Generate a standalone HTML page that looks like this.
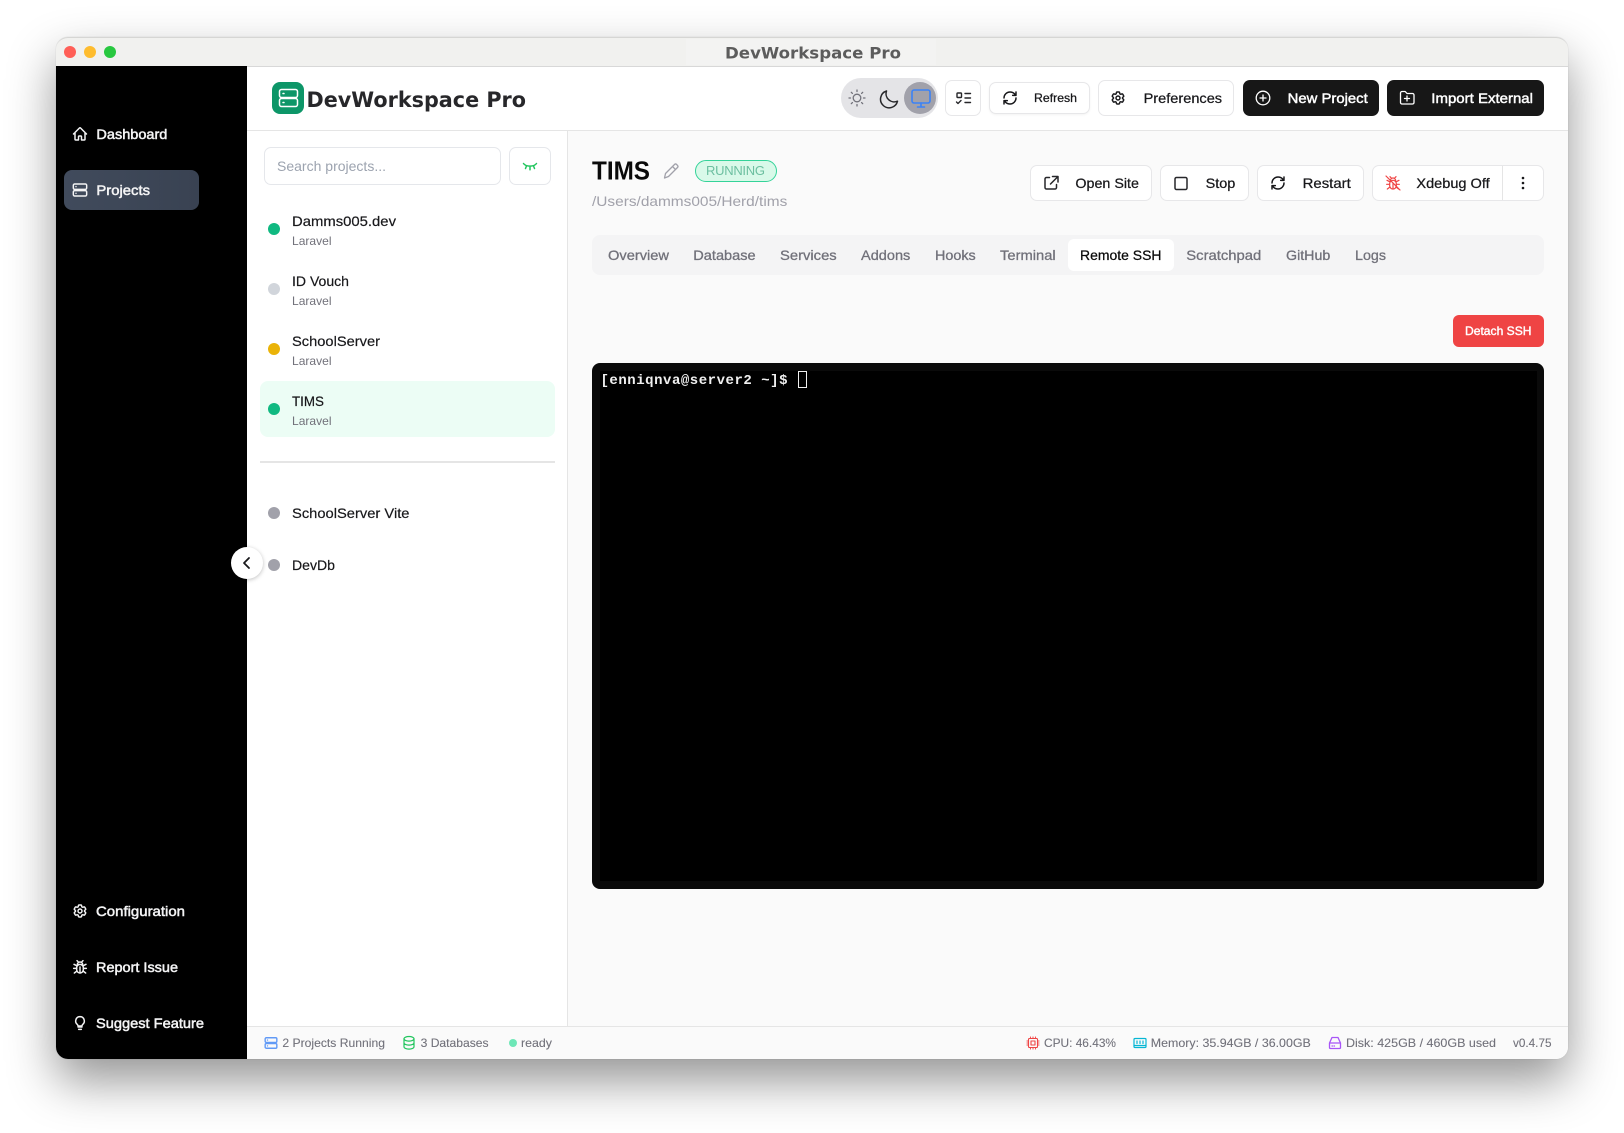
<!DOCTYPE html>
<html lang="en">
<head>
<meta charset="utf-8">
<title>DevWorkspace Pro</title>
<style>
html,body{margin:0;padding:0;background:#fff;width:1624px;height:1133px;overflow:hidden}
.a{position:absolute;box-sizing:border-box}
.btn{position:absolute;box-sizing:border-box;background:#fff;border:1px solid #e7e7e9;border-radius:7px}
.dark{position:absolute;background:#171717;border-radius:7px}
.dot{position:absolute;width:12px;height:12px;border-radius:50%}
svg.o{position:absolute;left:0;top:0;filter:blur(.25px)}
text{font-family:"Liberation Sans",sans-serif}
</style>
</head>
<body>
<!-- window -->
<div class="a" style="left:56px;top:37px;width:1512px;height:1022px;border-radius:12px;background:#fafafa;box-shadow:0 22px 48px rgba(0,0,0,.42),0 0 1px rgba(0,0,0,.2)"></div>
<!-- title bar -->
<div class="a" style="left:56px;top:37px;width:1512px;height:30px;background:#f1f1ef;border-radius:12px 12px 0 0;border-top:1px solid #d6d6d4;border-bottom:1px solid #d8d8d8"></div>
<div class="a" style="left:686px;top:39px;width:250px;height:26px;background:#f3f3f2"></div>
<div class="a" style="left:64px;top:46px;width:12px;height:12px;border-radius:50%;background:#ff5f57"></div>
<div class="a" style="left:84px;top:46px;width:12px;height:12px;border-radius:50%;background:#febc2e"></div>
<div class="a" style="left:104px;top:46px;width:12px;height:12px;border-radius:50%;background:#28c840"></div>
<!-- sidebar -->
<div class="a" style="left:56px;top:66px;width:191px;height:993px;background:#000;border-radius:0 0 0 12px"></div>
<div class="a" style="left:64px;top:170px;width:135px;height:40px;border-radius:8px;background:linear-gradient(90deg,#414b5c,#394252)"></div>
<!-- header -->
<div class="a" style="left:247px;top:67px;width:1321px;height:64px;background:#fff;border-bottom:1px solid #e5e5e5"></div>
<!-- list panel -->
<div class="a" style="left:247px;top:131px;width:321px;height:896px;background:#fff;border-right:1px solid #e5e5e5"></div>
<div class="a" style="left:264px;top:147px;width:237px;height:38px;border:1px solid #e5e7eb;border-radius:7px;background:#fff"></div>
<div class="a" style="left:509px;top:147px;width:42px;height:38px;border:1px solid #e5e7eb;border-radius:7px;background:#fff"></div>
<div class="a" style="left:260px;top:381px;width:295px;height:56px;border-radius:8px;background:#ecfdf5"></div>
<div class="a" style="left:260px;top:461px;width:295px;height:2px;background:#e5e5e5"></div>
<div class="dot" style="left:268px;top:223px;background:#10b981"></div>
<div class="dot" style="left:268px;top:283px;background:#d1d5db"></div>
<div class="dot" style="left:268px;top:343px;background:#eab308"></div>
<div class="dot" style="left:268px;top:403px;background:#10b981"></div>
<div class="dot" style="left:268px;top:507px;background:#a1a1aa"></div>
<div class="dot" style="left:268px;top:559px;background:#a1a1aa"></div>
<div class="a" style="left:231px;top:547px;width:32px;height:32px;border-radius:50%;background:#fff;box-shadow:0 1px 4px rgba(0,0,0,.25)"></div>
<!-- logo -->
<div class="a" style="left:272px;top:82px;width:32px;height:32px;border-radius:8px;background:#0d9668"></div>
<!-- header controls -->
<div class="a" style="left:841px;top:78px;width:97px;height:40px;border-radius:20px;background:#e4e4e7"></div>
<div class="a" style="left:904px;top:82px;width:32px;height:32px;border-radius:50%;background:#a1a1aa"></div>
<div class="btn" style="left:945px;top:80px;width:36px;height:36px"></div>
<div class="btn" style="left:989px;top:82px;width:101px;height:32px;box-shadow:0 1px 2px rgba(0,0,0,.05)"></div>
<div class="btn" style="left:1098px;top:80px;width:136px;height:36px"></div>
<div class="dark" style="left:1243px;top:80px;width:136px;height:36px"></div>
<div class="dark" style="left:1387px;top:80px;width:157px;height:36px"></div>
<!-- project header -->
<div class="a" style="left:695px;top:160px;width:82px;height:22px;border-radius:11px;background:#d9f9e9;border:1px solid #34d399"></div>
<div class="btn" style="left:1030px;top:165px;width:122px;height:36px"></div>
<div class="btn" style="left:1160px;top:165px;width:89px;height:36px"></div>
<div class="btn" style="left:1257px;top:165px;width:107px;height:36px"></div>
<div class="btn" style="left:1372px;top:165px;width:172px;height:36px"></div>
<div class="a" style="left:1502px;top:166px;width:1px;height:34px;background:#e5e5e5"></div>
<!-- tabs -->
<div class="a" style="left:592px;top:235px;width:952px;height:40px;border-radius:8px;background:#f4f4f5"></div>
<div class="a" style="left:1068px;top:239px;width:106px;height:32px;border-radius:6px;background:#fff"></div>
<!-- detach -->
<div class="a" style="left:1453px;top:315px;width:91px;height:32px;border-radius:6px;background:#ef4444"></div>
<!-- terminal -->
<div class="a" style="left:592px;top:363px;width:952px;height:526px;border-radius:8px;background:#0a0a0a"></div>
<div class="a" style="left:600px;top:371px;width:937px;height:510px;background:#000"></div>
<div class="a" style="left:798px;top:371px;width:9px;height:17px;border:1px solid #f0f0f0"></div>
<!-- status bar -->
<div class="a" style="left:247px;top:1026px;width:1321px;height:33px;background:#fafafa;border-top:1px solid #e5e5e5;border-radius:0 0 12px 0"></div>
<div class="a" style="left:509px;top:1039px;width:8px;height:8px;border-radius:50%;background:#6ee7b7"></div>

<svg class="o" width="1624" height="1133" viewBox="0 0 1624 1133" xmlns="http://www.w3.org/2000/svg" fill="none" stroke-linecap="round" stroke-linejoin="round">
<defs>
<symbol id="home" viewBox="0 0 24 24"><path d="M2.25 12l8.954-8.955c.44-.439 1.152-.439 1.591 0L21.75 12M4.5 9.75v10.125c0 .621.504 1.125 1.125 1.125H9.75v-4.875c0-.621.504-1.125 1.125-1.125h2.25c.621 0 1.125.504 1.125 1.125V21h4.125c.621 0 1.125-.504 1.125-1.125V9.75"/></symbol>
<symbol id="server" viewBox="0 0 24 24"><rect x="2" y="3" width="20" height="8" rx="2"/><rect x="2" y="13" width="20" height="8" rx="2"/><path d="M6 7h.01M6 17h.01"/></symbol>
<symbol id="gear" viewBox="0 0 24 24"><path d="M9.594 3.94c.09-.542.56-.94 1.11-.94h2.593c.55 0 1.02.398 1.11.94l.213 1.281c.063.374.313.686.645.87.074.04.147.083.22.127.324.196.72.257 1.075.124l1.217-.456a1.125 1.125 0 011.37.49l1.296 2.247a1.125 1.125 0 01-.26 1.431l-1.003.827c-.293.24-.438.613-.431.992a6.759 6.759 0 010 .255c-.007.378.138.75.43.99l1.005.828c.424.35.534.954.26 1.43l-1.298 2.247a1.125 1.125 0 01-1.369.491l-1.217-.456c-.355-.133-.75-.072-1.076.124a6.57 6.57 0 01-.22.128c-.331.183-.581.495-.644.869l-.213 1.28c-.09.543-.56.941-1.11.941h-2.594c-.55 0-1.02-.398-1.11-.94l-.213-1.281c-.062-.374-.312-.686-.644-.87a6.52 6.52 0 01-.22-.127c-.325-.196-.72-.257-1.076-.124l-1.217.456a1.125 1.125 0 01-1.369-.49l-1.297-2.247a1.125 1.125 0 01.26-1.431l1.004-.827c.292-.24.437-.613.43-.992a6.932 6.932 0 010-.255c.007-.378-.138-.75-.43-.99l-1.004-.828a1.125 1.125 0 01-.26-1.43l1.297-2.247a1.125 1.125 0 011.37-.491l1.216.456c.356.133.751.072 1.076-.124.072-.044.146-.087.22-.128.332-.183.582-.495.644-.869l.214-1.281z"/><circle cx="12" cy="12" r="3"/></symbol>
<symbol id="bug" viewBox="0 0 24 24"><path d="M8 8.5a4 4 0 018 0"/><rect x="7" y="8" width="10" height="13" rx="5"/><path d="M9 4L7.5 2.5M15 4l1.5-1.5M7 10L3 8M17 10l4-2M7 14H2.5M17 14h4.5M7.5 18L3.5 21M16.5 18l4 3M12 12v9"/></symbol>
<symbol id="bulb" viewBox="0 0 24 24"><path d="M9 18h6M10 21.5h4M12 2.500a6.500 6.500 0 00-4 11.600c.8.700 1 1.400 1 2.400h6c0-1 .2-1.700 1-2.400A6.500 6.500 0 0012 2.500z"/></symbol>
<symbol id="refresh" viewBox="0 0 24 24"><path d="M3 12a9 9 0 0 1 9-9 9.75 9.75 0 0 1 6.74 2.74L21 8M21 3v5h-5M21 12a9 9 0 0 1-9 9 9.75 9.75 0 0 1-6.74-2.74L3 16M8 16H3v5"/></symbol>
</defs>

<!-- title bar -->
<text x="725" y="58.5" textLength="176" lengthAdjust="spacingAndGlyphs" style="font-family:'DejaVu Sans',sans-serif;font-weight:700;font-size:16px" fill="#5c5c5c">DevWorkspace Pro</text>

<!-- sidebar icons -->
<g stroke="#f4f4f5" stroke-width="2.2">
<use href="#home" x="72" y="126" width="16" height="16"/>
<use href="#server" x="72" y="182" width="16" height="16"/>
<use href="#gear" x="72" y="903" width="16" height="16"/>
<use href="#bug" x="72" y="959" width="16" height="16"/>
<use href="#bulb" x="72" y="1015" width="16" height="16"/>
</g>
<!-- sidebar text -->
<g font-size="14" fill="#f4f4f5" stroke="#f4f4f5" stroke-width=".5">
<text x="96.4" y="139" textLength="71" lengthAdjust="spacingAndGlyphs">Dashboard</text>
<text x="96.4" y="195" textLength="53.6" lengthAdjust="spacingAndGlyphs">Projects</text>
<text x="96" y="916" textLength="89" lengthAdjust="spacingAndGlyphs">Configuration</text>
<text x="96" y="972" textLength="82" lengthAdjust="spacingAndGlyphs">Report Issue</text>
<text x="96" y="1028" textLength="108" lengthAdjust="spacingAndGlyphs">Suggest Feature</text>
</g>

<!-- logo -->
<g stroke="#fff" stroke-width="1.5">
<rect x="279.5" y="89.5" width="18" height="8" rx="2"/>
<rect x="279.5" y="98.5" width="18" height="8" rx="2"/>
<path d="M283 93.5h1M283 102.5h1"/>
</g>
<text x="306.5" y="107" textLength="219.5" lengthAdjust="spacingAndGlyphs" style="font-family:'DejaVu Sans',sans-serif;font-weight:700;font-size:21.5px" fill="#27272a">DevWorkspace Pro</text>

<!-- search -->
<text x="277" y="171" textLength="109" lengthAdjust="spacingAndGlyphs" font-size="14" fill="#9ca3af">Search projects...</text>
<g stroke="#22c55e" stroke-width="1.5"><path d="M523.5 163.5c2.500 3.500 10.500 3.500 13 0M526.500 166l-1 2.500M530 167v2.800M533.500 166l1 2.500"/></g>

<!-- list -->
<g font-size="14" fill="#18181b" stroke="#18181b" stroke-width=".2">
<text x="292" y="226" textLength="104" lengthAdjust="spacingAndGlyphs">Damms005.dev</text>
<text x="292" y="286" textLength="57" lengthAdjust="spacingAndGlyphs">ID Vouch</text>
<text x="292" y="346" textLength="88" lengthAdjust="spacingAndGlyphs">SchoolServer</text>
<text x="292" y="406" textLength="32" lengthAdjust="spacingAndGlyphs">TIMS</text>
<text x="292" y="518" textLength="117.5" lengthAdjust="spacingAndGlyphs">SchoolServer Vite</text>
<text x="292" y="570" textLength="43" lengthAdjust="spacingAndGlyphs">DevDb</text>
</g>
<g font-size="12" fill="#71717a">
<text x="292" y="245" textLength="39.5" lengthAdjust="spacingAndGlyphs">Laravel</text>
<text x="292" y="305" textLength="39.5" lengthAdjust="spacingAndGlyphs">Laravel</text>
<text x="292" y="365" textLength="39.5" lengthAdjust="spacingAndGlyphs">Laravel</text>
<text x="292" y="425" textLength="39.5" lengthAdjust="spacingAndGlyphs">Laravel</text>
</g>
<path d="M249 558l-5 5 5 5" stroke="#18181b" stroke-width="1.8"/>

<!-- theme icons -->
<g stroke="#71717a" stroke-width="1.3"><circle cx="857" cy="98" r="3.8"/><path d="M857 90v1.500M857 104.500v1.500M849 98h1.500M863.500 98h1.500M851.300 92.300l1.100 1.100M861.600 102.600l1.100 1.100M851.300 103.700l1.100-1.100M861.600 93.400l1.100-1.100"/></g>
<path d="M897 102.200A8.200 8.200 0 0 1 886 92a8.600 8.600 0 1 0 11 10.200z" transform="translate(.5 -1)" stroke="#27272a" stroke-width="1.5"/>
<g stroke="#3b82f6" stroke-width="1.6"><rect x="912" y="90" width="18" height="13" rx="2"/><path d="M921 103v4M917.500 107h7"/></g>

<!-- checklist -->
<g stroke="#27272a" stroke-width="1.4"><rect x="957" y="93" width="4.5" height="4.5" rx=".8"/><path d="M956.500 102l1.500 1.500 3-3M965 93.500h5.500M965 98h5.500M965 102.500h5.500"/></g>

<!-- header button icons -->
<g stroke="#18181b" stroke-width="2.2">
<use href="#refresh" x="1002" y="90" width="16" height="16"/>
<use href="#gear" x="1110" y="90" width="16" height="16"/>
</g>
<g stroke="#fff" stroke-width="1.3">
<circle cx="1263" cy="98" r="6.800"/><path d="M1263 95v6M1260 98h6"/>
<path d="M1400.500 93a1.500 1.500 0 0 1 1.500-1.500h3.200l1.800 2h5.500a1.500 1.500 0 0 1 1.500 1.500v7.500a1.500 1.500 0 0 1-1.500 1.500h-10.500a1.500 1.500 0 0 1-1.500-1.500zM1407 96v5M1404.500 98.500h5"/>
</g>
<text x="1034" y="102" textLength="43" lengthAdjust="spacingAndGlyphs" font-size="12" fill="#18181b" stroke="#18181b" stroke-width=".25">Refresh</text>
<text x="1143.6" y="103" textLength="78.5" lengthAdjust="spacingAndGlyphs" font-size="14" fill="#18181b" stroke="#18181b" stroke-width=".25">Preferences</text>
<g font-size="14" fill="#fff" stroke="#fff" stroke-width=".45">
<text x="1287.7" y="103" textLength="80" lengthAdjust="spacingAndGlyphs">New Project</text>
<text x="1431.3" y="103" textLength="101.7" lengthAdjust="spacingAndGlyphs">Import External</text>
</g>

<!-- project header -->
<text x="592" y="179.5" textLength="58" lengthAdjust="spacingAndGlyphs" font-size="26" font-weight="700" fill="#0a0a0a">TIMS</text>
<path d="M664.500 178l1-4.500 9-9a1.500 1.500 0 0 1 2.100 0l.9.900a1.500 1.500 0 0 1 0 2.100l-9 9zM672.500 166.500l3 3" stroke="#a1a1aa" stroke-width="1.300"/>
<text x="706" y="175" textLength="59" font-size="13" fill="#6cbfa0">RUNNING</text>
<text x="592" y="206" textLength="195.3" lengthAdjust="spacingAndGlyphs" font-size="14" fill="#a1a1aa">/Users/damms005/Herd/tims</text>

<g stroke="#27272a" stroke-width="1.5">
<path d="M1056.500 184.500v3a1.500 1.500 0 0 1-1.500 1.500h-8.500a1.500 1.500 0 0 1-1.500-1.500v-8.500a1.500 1.500 0 0 1 1.500-1.500h3M1052.500 176.500h5.500v5.500M1050.500 184l7.500-7.500"/>
<rect x="1175" y="177.500" width="12" height="12" rx="1.500"/>
</g>
<g stroke="#18181b" stroke-width="2.2"><use href="#refresh" x="1270" y="175" width="16" height="16"/></g>
<g stroke="#ef4444" stroke-width="1.800">
<use href="#bug" x="1385" y="175" width="16" height="16"/>
</g>
<path d="M1386 176l14 14" stroke="#ef4444" stroke-width="1.200"/>
<circle cx="1523" cy="178" r="1.300" fill="#18181b"/><circle cx="1523" cy="183" r="1.300" fill="#18181b"/><circle cx="1523" cy="188" r="1.300" fill="#18181b"/>
<g font-size="14" fill="#18181b" stroke="#18181b" stroke-width=".25">
<text x="1075.4" y="188" textLength="63.6" lengthAdjust="spacingAndGlyphs">Open Site</text>
<text x="1205.6" y="188" textLength="29.7" lengthAdjust="spacingAndGlyphs">Stop</text>
<text x="1302.6" y="188" textLength="48.2" lengthAdjust="spacingAndGlyphs">Restart</text>
<text x="1416.4" y="188" textLength="73.3" lengthAdjust="spacingAndGlyphs">Xdebug Off</text>
</g>

<!-- tabs -->
<g font-size="14" fill="#71717a" stroke="#71717a" stroke-width=".3">
<text x="608" y="260" textLength="61" lengthAdjust="spacingAndGlyphs">Overview</text>
<text x="693.3" y="260" textLength="62.3" lengthAdjust="spacingAndGlyphs">Database</text>
<text x="780" y="260" textLength="56.7" lengthAdjust="spacingAndGlyphs">Services</text>
<text x="861" y="260" textLength="49.3" lengthAdjust="spacingAndGlyphs">Addons</text>
<text x="935" y="260" textLength="40.7" lengthAdjust="spacingAndGlyphs">Hooks</text>
<text x="1000" y="260" textLength="55.7" lengthAdjust="spacingAndGlyphs">Terminal</text>
<text x="1186.3" y="260" textLength="75" lengthAdjust="spacingAndGlyphs">Scratchpad</text>
<text x="1286" y="260" textLength="44.3" lengthAdjust="spacingAndGlyphs">GitHub</text>
<text x="1355" y="260" textLength="31" lengthAdjust="spacingAndGlyphs">Logs</text>
</g>
<text x="1080" y="260" textLength="81.5" lengthAdjust="spacingAndGlyphs" font-size="14" fill="#0a0a0a" stroke="#0a0a0a" stroke-width=".25">Remote SSH</text>

<!-- detach -->
<text x="1465" y="335" textLength="66.5" lengthAdjust="spacingAndGlyphs" font-size="12" fill="#fff" stroke="#fff" stroke-width=".4">Detach SSH</text>

<!-- terminal text -->
<text x="600.5" y="384" textLength="187" style="font-family:'Liberation Mono',monospace;font-weight:700;font-size:14px" fill="#f0f0f0">[enniqnva@server2 ~]$</text>

<!-- status bar -->
<g stroke="#3b82f6" stroke-width="2.4" opacity=".8"><use href="#server" x="264" y="1036" width="14" height="14"/></g>
<g stroke="#22c55e" stroke-width="1.2"><ellipse cx="409" cy="1038.8" rx="5" ry="2.3"/><path d="M404 1038.800v8c0 1.300 2.200 2.300 5 2.300s5-1 5-2.300v-8M404 1042.800c0 1.300 2.200 2.300 5 2.300s5-1 5-2.300"/></g>
<g stroke="#ef4444" stroke-width="1.100"><rect x="1028.500" y="1038.500" width="9" height="9" rx="1"/><rect x="1031" y="1041" width="4" height="4"/><path d="M1030.500 1037v.5M1033 1037v.5M1035.500 1037v.5M1030.500 1048.500v.5M1033 1048.500v.5M1035.500 1048.500v.5M1027 1041h.5M1027 1043h.5M1027 1045h.5M1038.500 1041h.5M1038.500 1043h.5M1038.500 1045h.5"/></g>
<g stroke="#06b6d4" stroke-width="1.200"><rect x="1134" y="1038.500" width="12" height="9" rx="1"/><path d="M1137 1041v2.500M1140 1041v2.500M1143 1041v2.500M1134 1045.500h12"/></g>
<g stroke="#a855f7" stroke-width="1.300"><path d="M1329.500 1043l2.500-5.500h6l2.500 5.500v4.500a1 1 0 0 1-1 1h-9a1 1 0 0 1-1-1zM1329.500 1043h11M1332 1046h.5M1334 1046h.5"/></g>
<g font-size="12" fill="#71717a" stroke="#71717a" stroke-width=".1">
<text x="282.4" y="1047" textLength="102.6" lengthAdjust="spacingAndGlyphs">2 Projects Running</text>
<text x="420.6" y="1047" textLength="68" lengthAdjust="spacingAndGlyphs">3 Databases</text>
<text x="521" y="1047" textLength="31" lengthAdjust="spacingAndGlyphs">ready</text>
<text x="1044" y="1047" textLength="72" lengthAdjust="spacingAndGlyphs">CPU: 46.43%</text>
<text x="1150.8" y="1047" textLength="160" lengthAdjust="spacingAndGlyphs">Memory: 35.94GB / 36.00GB</text>
<text x="1346" y="1047" textLength="150" lengthAdjust="spacingAndGlyphs">Disk: 425GB / 460GB used</text>
<text x="1513" y="1047" textLength="38.5" lengthAdjust="spacingAndGlyphs">v0.4.75</text>
</g>
</svg>
</body>
</html>
